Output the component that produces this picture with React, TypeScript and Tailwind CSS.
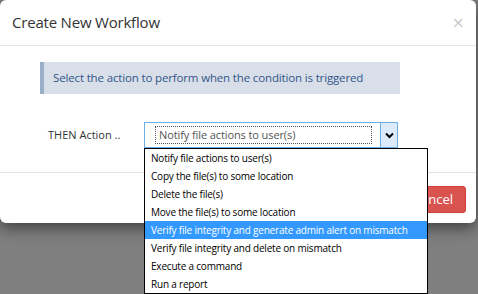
const font = { fontFamily: '"Open Sans", "Noto Sans", sans-serif' };

const actions = [
  'Notify file actions to user(s)',
  'Copy the file(s) to some location',
  'Delete the file(s)',
  'Move the file(s) to some location',
  'Verify file integrity and generate admin alert on mismatch',
  'Verify file integrity and delete on mismatch',
  'Execute a command',
  'Run a report',
];

export default function App() {
  const selected = 4;

  return (
    <div
      className="relative w-[478px] h-[294px] overflow-hidden bg-[#7f7f7f] font-['Open_Sans',sans-serif]"
    >
      {/* modal */}
      <div className="w-[476px] h-[223px] bg-white rounded-[6px] shadow-[0_5px_15px_rgba(0,0,0,0.5)] flex flex-col">
        <div className="h-[46px] flex items-center justify-between pl-[12px] pr-[12px] border-b border-[#e5e5e5]">
          <h4 className="text-[15px] tracking-[-0.2px] text-[#333] leading-none">Create New Workflow</h4>
          <span className="text-[20px] text-[#c8c8c8] leading-none">×</span>
        </div>

        <div className="h-[126px] pt-[16px]">
          <div className="ml-[40px] w-[360px] h-[32px] flex items-center bg-[#d9dfe8] border-l-[4px] border-[#9aafc7] pl-[9px]">
            <span className="text-[11.5px] text-[#31568c] tracking-[-0.15px]">
              Select the action to perform when the condition is triggered
            </span>
          </div>

          <div className="mt-[28px] flex items-center">
            <span className="ml-[48px] w-[96px] text-[11px] text-[#333]">THEN Action ..</span>
            <div className="w-[254px] h-[26px] flex border border-[#6aaee8]">
              <div className="flex-1 flex items-center pl-[10px] pr-[8px]">
                <div className="w-full h-[18px] flex items-center border border-dotted border-[#555] pl-[3px]">
                  <span className="text-[11px] tracking-[-0.1px] text-[#555]">Notify file actions to user(s)</span>
                </div>
              </div>
              <div className="w-[17px] h-full flex items-center justify-center bg-[#dcebfc] border-l border-[#6aaee8]">
                <svg width="9" height="7" viewBox="0 0 9 7">
                  <path d="M1 1.5 L4.5 5 L8 1.5" fill="none" stroke="#000" strokeWidth="2" />
                </svg>
              </div>
            </div>
          </div>
        </div>

        <div className="flex-1 border-t border-[#e5e5e5] flex justify-end items-start pt-[13px] pr-[10px]">
          <button className="h-[27px] px-[12px] rounded-[3px] bg-[#d9534f] border border-[#d43f3a] text-white text-[13px]">
            Cancel
          </button>
        </div>
      </div>

      {/* open dropdown list */}
      <ul
        className="absolute left-[144px] top-[148px] w-[284px] bg-white border border-black"
        style={font}
      >
        {actions.map((a, i) => (
          <li
            key={a}
            className={`h-[18px] pl-[6px] flex items-center whitespace-nowrap text-[10px] tracking-[-0.2px] ${
              i === selected ? 'bg-[#3399ff] text-white' : 'text-black'
            }`}
          >
            {a}
          </li>
        ))}
      </ul>
    </div>
  );
}
